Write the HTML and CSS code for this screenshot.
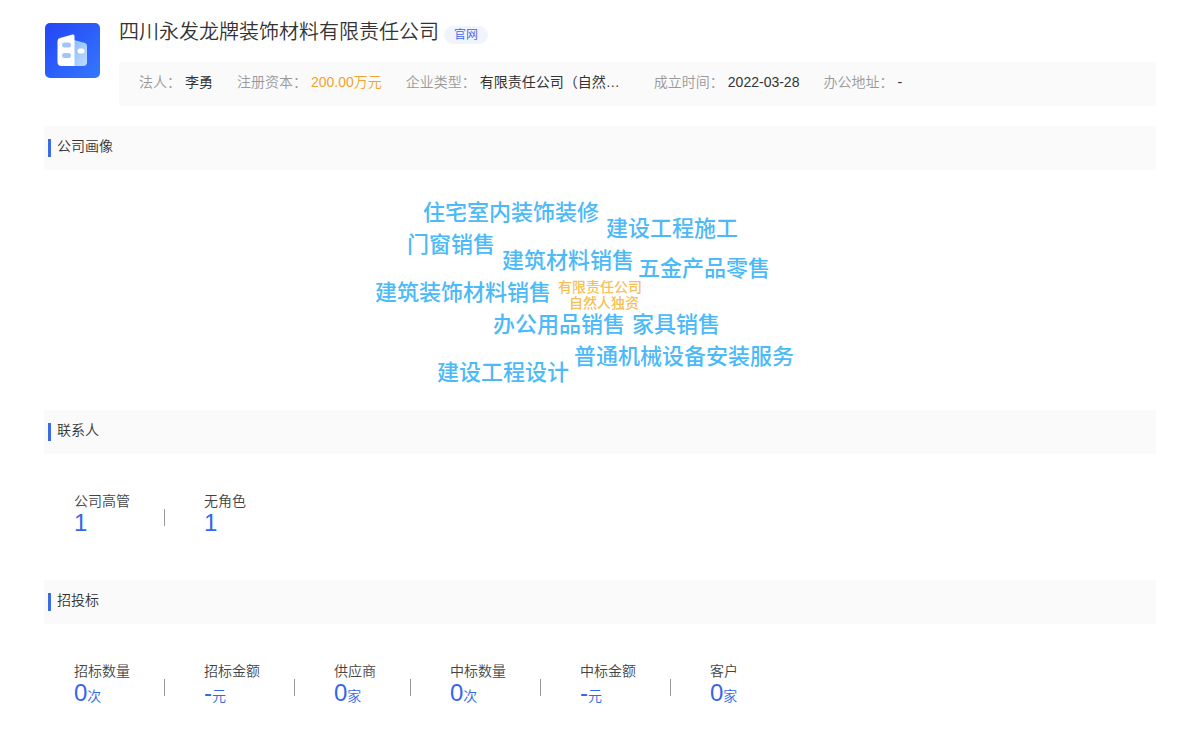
FILE: index.html
```html
<!DOCTYPE html>
<html lang="zh-CN">
<head>
<meta charset="utf-8">
<meta name="viewport" content="width=device-width, initial-scale=1">
<title>四川永发龙牌装饰材料有限责任公司</title>
<link rel="stylesheet" href="styles.css">
</head>
<body>
<main class="page">
  <header class="company">
    <svg class="logo" viewBox="0 0 56 56" aria-hidden="true">
      <defs>
        <linearGradient id="logo-bg" x1="0" y1="0" x2="1" y2="1"><stop offset="0" stop-color="#2345f5"/><stop offset="1" stop-color="#3478ff"/></linearGradient>
        <linearGradient id="logo-side" x1="0" y1="0" x2="1" y2="1"><stop offset="0" stop-color="#8dbcff"/><stop offset="1" stop-color="#c0dcff"/></linearGradient>
      </defs>
      <rect x="1" y="1" width="55" height="55" rx="5" fill="url(#logo-bg)"/>
      <path d="M30 18l11 3q2 .6 2 3v16q0 4-4 4h-9z" fill="url(#logo-side)"/>
      <path d="M16 16l12.500-3.500q2-.5 2 1.500v30H17.500q-4 0-4-4V19q0-2.400 2.500-3z" fill="#fff"/>
      <rect x="18" y="20.500" width="9" height="5" rx="2.500" fill="#a3c4fb"/>
      <rect x="18" y="31" width="9" height="5" rx="2.500" fill="#a3c4fb"/>
      <rect x="33.500" y="26.500" width="7" height="5" rx="2.500" fill="#fff"/>
    </svg>
    <div class="company-body">
      <div class="title-row">
        <h1 class="title">四川永发龙牌装饰材料有限责任公司</h1>
        <a class="site-link" href="#">官网</a>
      </div>
      <dl class="info">
        <div class="info-item"><dt>法人：</dt><dd>李勇</dd></div>
        <div class="info-item"><dt>注册资本：</dt><dd class="capital">200.00万元</dd></div>
        <div class="info-item"><dt>企业类型：</dt><dd class="type">有限责任公司（自然…</dd></div>
        <div class="info-item"><dt>成立时间：</dt><dd>2022-03-28</dd></div>
        <div class="info-item"><dt>办公地址：</dt><dd>-</dd></div>
      </dl>
    </div>
  </header>

  <section>
    <h2 class="section-title">公司画像</h2>
    <div class="cloud">
      <span class="word w1">住宅室内装饰装修</span>
      <span class="word w2">建设工程施工</span>
      <span class="word w3">门窗销售</span>
      <span class="word w4">建筑材料销售</span>
      <span class="word w5">五金产品零售</span>
      <span class="word w6">建筑装饰材料销售</span>
      <span class="word small w7">有限责任公司</span>
      <span class="word small w8">自然人独资</span>
      <span class="word w9">办公用品销售</span>
      <span class="word w10">家具销售</span>
      <span class="word w11">普通机械设备安装服务</span>
      <span class="word w12">建设工程设计</span>
    </div>
  </section>

  <section>
    <h2 class="section-title">联系人</h2>
    <dl class="stats">
      <div class="stat"><dt>公司高管</dt><dd>1</dd></div>
      <div class="stat"><dt>无角色</dt><dd>1</dd></div>
    </dl>
  </section>

  <section>
    <h2 class="section-title">招投标</h2>
    <dl class="stats">
      <div class="stat"><dt>招标数量</dt><dd>0<small>次</small></dd></div>
      <div class="stat"><dt>招标金额</dt><dd>-<small>元</small></dd></div>
      <div class="stat"><dt>供应商</dt><dd>0<small>家</small></dd></div>
      <div class="stat"><dt>中标数量</dt><dd>0<small>次</small></dd></div>
      <div class="stat"><dt>中标金额</dt><dd>-<small>元</small></dd></div>
      <div class="stat"><dt>客户</dt><dd>0<small>家</small></dd></div>
    </dl>
  </section>
</main>
</body>
</html>
```
FILE: styles.css
```css
* { box-sizing: border-box; margin: 0; padding: 0; }

body {
  background: #fff;
  color: #444;
  font: 350 14px/22px "Liberation Sans", "Noto Sans CJK SC", sans-serif;
}

.page { padding: 16px 44px 0; }

.company { display: flex; gap: 19px; margin-bottom: 20px; }
.logo { flex: none; width: 56px; height: 56px; margin-top: 6px; }
.company-body { flex: 1; min-width: 0; }
.title-row { display: flex; align-items: flex-start; gap: 5px; height: 46px; }
.title { font-size: 20px; font-weight: 350; line-height: 32px; color: #333; }
.site-link {
  margin-top: 10px;
  padding: 0 10px;
  border-radius: 9px;
  background: #eff4ff;
  color: #3a66e8;
  font-size: 12px;
  line-height: 18px;
  text-decoration: none;
}

.info { display: flex; flex-wrap: wrap; column-gap: 24px; padding: 9px 20px 13px; background: #fafafa; }
.info-item { display: flex; gap: 4px; }
.info dt { color: #999; }
.info dd { color: #333; font-weight: 400; }
.info .capital { color: #f0a32f; font-weight: 350; }
.info .type { min-width: 150px; white-space: nowrap; }

.section-title {
  display: flex;
  align-items: center;
  gap: 6px;
  height: 44px;
  padding: 0 4px 4px;
  background: #fafafa;
  font-size: 14px;
  font-weight: 350;
  color: #333;
}
.section-title::before { content: ""; width: 3px; height: 18px; margin-top: 4px; background: #3b6be6; }

.cloud { position: relative; height: 240px; }
.word { position: absolute; color: #4cbaf8; font-size: 22px; font-weight: 500; line-height: 34px; white-space: nowrap; }
.small { color: #f8c054; font-size: 14px; line-height: 16px; }
.w1 { left: calc(50% - 177px); top: 26px; }
.w2 { left: calc(50% + 6px); top: 42px; }
.w3 { left: calc(50% - 193px); top: 58px; }
.w4 { left: calc(50% - 98px); top: 74px; }
.w5 { left: calc(50% + 38px); top: 82px; }
.w6 { left: calc(50% - 225px); top: 106px; }
.w7 { left: calc(50% - 42px); top: 109px; }
.w8 { left: calc(50% - 31px); top: 125px; }
.w9 { left: calc(50% - 107px); top: 138px; }
.w10 { left: calc(50% + 32px); top: 138px; }
.w11 { left: calc(50% - 26px); top: 170px; }
.w12 { left: calc(50% - 163px); top: 186px; }

.stats { display: flex; flex-wrap: wrap; min-height: 126px; padding: 36px 30px; }
.stat { position: relative; margin-right: 74px; }
.stat:not(:last-child)::after {
  content: "";
  position: absolute;
  right: -35px;
  top: 19px;
  width: 1px;
  height: 17px;
  background: #999;
}
.stat dt { color: #444; }
.stat dd { color: #3467e8; font-size: 24px; line-height: 22px; }
.stat small { font-size: 14px; }
```
